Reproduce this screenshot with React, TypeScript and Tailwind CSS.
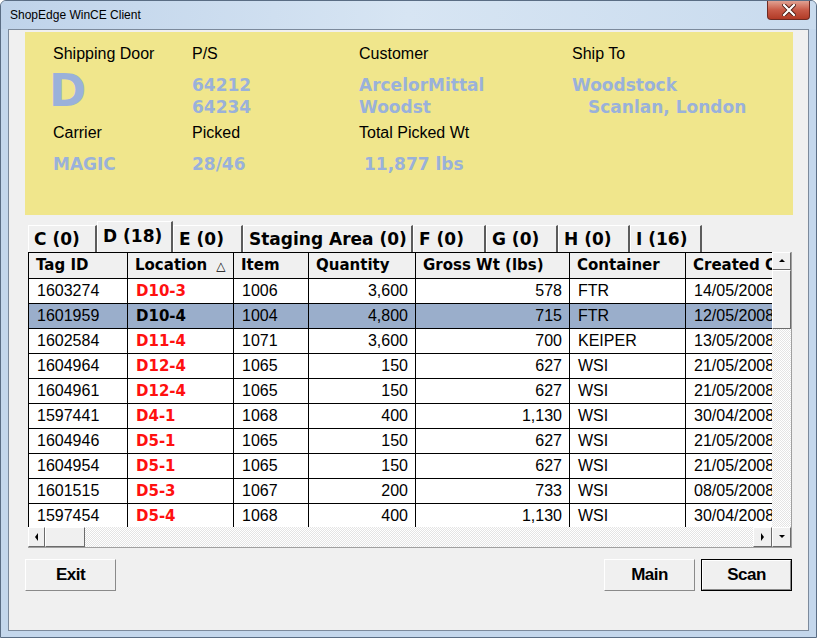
import React from "react";

const rows = [
  ["1603274", "D10-3", "1006", "3,600", "578", "FTR", "14/05/2008"],
  ["1601959", "D10-4", "1004", "4,800", "715", "FTR", "12/05/2008"],
  ["1602584", "D11-4", "1071", "3,600", "700", "KEIPER", "13/05/2008"],
  ["1604964", "D12-4", "1065", "150", "627", "WSI", "21/05/2008"],
  ["1604961", "D12-4", "1065", "150", "627", "WSI", "21/05/2008"],
  ["1597441", "D4-1", "1068", "400", "1,130", "WSI", "30/04/2008"],
  ["1604946", "D5-1", "1065", "150", "627", "WSI", "21/05/2008"],
  ["1604954", "D5-1", "1065", "150", "627", "WSI", "21/05/2008"],
  ["1601515", "D5-3", "1067", "200", "733", "WSI", "08/05/2008"],
  ["1597454", "D5-4", "1068", "400", "1,130", "WSI", "30/04/2008"],
];

const tabs = [
  { label: "C (0)", w: "w-[69px]" },
  { label: "D (18)", w: "w-[76px]", active: true },
  { label: "E (0)", w: "w-[70px]" },
  { label: "Staging Area (0)", w: "w-[170px]" },
  { label: "F (0)", w: "w-[73px]" },
  { label: "G (0)", w: "w-[72px]" },
  { label: "H (0)", w: "w-[72px]" },
  { label: "I (16)", w: "w-[72px]" },
];

const colW = ["w-[99px]", "w-[106px]", "w-[75px]", "w-[107px]", "w-[154px]", "w-[116px]", "w-[130px]"];
const headers = ["Tag ID", "Location", "Item", "Quantity", "Gross Wt (lbs)", "Container", "Created On"];
const rightAlign = [false, false, false, true, true, false, false];

const dither = "bg-[repeating-conic-gradient(#ffffff_0_25%,#e4e4e4_0_50%)] bg-[length:2px_2px]";

function Arrow({ dir }: { dir: "up" | "down" | "left" | "right" }) {
  const pts = {
    up: "1,5 4,2 7,5",
    down: "1,2 4,5 7,2",
    left: "5,0 2,4 5,8",
    right: "2,0 5,4 2,8",
  }[dir];
  return (
    <svg width="8" height="8" viewBox="0 0 8 8">
      <polygon points={pts} fill="#000" />
    </svg>
  );
}

function ScrollBtn({ dir, cls }: { dir: "up" | "down" | "left" | "right"; cls: string }) {
  return (
    <div
      className={`${cls} flex items-center justify-center bg-[#f0f0f0] border border-t-white border-l-white border-r-[#6b6b6b] border-b-[#6b6b6b]`}
    >
      <Arrow dir={dir} />
    </div>
  );
}

function Btn({ label, def }: { label: string; def?: boolean }) {
  return (
    <div className={def ? "border border-black" : ""}>
      <div
        className={`${def ? "w-[89px] h-[30px]" : "w-[91px] h-[32px]"} flex items-center justify-center bg-[#f0f0f0] border border-t-white border-l-white border-r-[#8a8a8a] border-b-[#8a8a8a] font-['Liberation_Sans',sans-serif] font-bold text-[17px] text-black tracking-[-0.5px]`}
      >
        {label}
      </div>
    </div>
  );
}

export default function App() {
  const val = "font-['DejaVu_Sans',sans-serif] font-bold text-[17px] leading-[22px] text-[#9ab1da]";
  const lbl = "font-['Liberation_Sans',sans-serif] text-[16px] leading-[20px] text-black";
  return (
    <div className="w-[817px] h-[638px] overflow-hidden bg-[#c4d7ec] border border-[#5a6d84] rounded-t-[6px] flex flex-col">
      {/* title bar */}
      <div className="h-[28px] shrink-0 flex items-start justify-between bg-gradient-to-r from-[#bfd3ea] via-[#d7e5f3] to-[#c9dbee] pl-[9px]">
        <div className="pt-[7px] font-['Liberation_Sans',sans-serif] text-[12px] leading-[15px] text-black">
          ShopEdge WinCE Client
        </div>
        <div className="mr-[6px] w-[43px] h-[19px] rounded-b-[4px] border border-[#6e2a22] border-t-0 bg-gradient-to-b from-[#e0a192] via-[#c85a47] to-[#b13a26] flex items-center justify-center">
          <svg width="14" height="12" viewBox="0 0 14 12">
            <path d="M2 1 L12 11 M12 1 L2 11" stroke="#4a1a12" strokeWidth="4" strokeLinecap="square" />
            <path d="M2 1 L12 11 M12 1 L2 11" stroke="#fff" strokeWidth="2.2" strokeLinecap="square" />
          </svg>
        </div>
      </div>

      {/* client area */}
      <div className="mx-[7px] h-[602px] shrink-0 border border-[#7c8a9c] bg-[#f0f0f0] flex flex-col">
        {/* info panel */}
        <div className="ml-[16px] mt-[2px] w-[768px] h-[183px] bg-[#f0e68c] pt-[12px] pl-[28px]">
          <div className="grid grid-cols-[139px_167px_213px_1fr]">
            <div className={lbl}>Shipping Door</div>
            <div className={lbl}>P/S</div>
            <div className={lbl}>Customer</div>
            <div className={lbl}>Ship To</div>

            <div className="mt-[10px] h-[44px] -ml-[4px] font-['DejaVu_Sans',sans-serif] font-bold text-[45px] leading-[34px] text-[#9ab1da]">
              D
            </div>
            <div className={`mt-[10px] ${val}`}>
              <div>64212</div>
              <div>64234</div>
            </div>
            <div className={`mt-[10px] ${val}`}>
              <div>ArcelorMittal</div>
              <div>Woodst</div>
            </div>
            <div className={`mt-[10px] ${val}`}>
              <div>Woodstock</div>
              <div className="pl-[16px]">Scanlan, London</div>
            </div>

            <div className={`mt-[5px] ${lbl}`}>Carrier</div>
            <div className={`mt-[5px] ${lbl}`}>Picked</div>
            <div className={`mt-[5px] ${lbl}`}>Total Picked Wt</div>
            <div className="mt-[5px]" />

            <div className={`mt-[10px] ${val}`}>MAGIC</div>
            <div className={`mt-[10px] ${val}`}>28/46</div>
            <div className={`mt-[10px] pl-[5px] ${val}`}>11,877 lbs</div>
            <div />
          </div>
        </div>

        {/* tabs */}
        <div className="ml-[19px] mt-[7px] h-[30px] flex items-end">
          {tabs.map((t) => (
            <div
              key={t.label}
              className={`${t.w} ${t.active ? "h-[31px] pb-[3px]" : "h-[27px]"} flex items-center pl-[5px] bg-[#f0f0f0] border-t border-l border-t-white border-l-white border-r-2 border-r-[#5c5c5c] font-['DejaVu_Sans',sans-serif] font-bold text-[17px] leading-[20px] text-black whitespace-nowrap overflow-hidden`}
            >
              {t.label}
            </div>
          ))}
        </div>

        {/* grid */}
        <div className="ml-[19px] w-[764px] h-[296px] flex border-r border-b border-[#a0a0a0] bg-[#f0f0f0]">
          <div className="w-[744px] flex flex-col">
            <div className="h-[276px] overflow-hidden border-l border-t border-black font-['Liberation_Sans',sans-serif] text-[16px] text-black">
              <div className="flex h-[26px] bg-[#f0f0f0]">
                {headers.map((h, i) => (
                  <div
                    key={h}
                    className={`${colW[i]} shrink-0 border-r border-b border-black flex items-center pl-[7px] font-['DejaVu_Sans',sans-serif] font-bold text-[15px] whitespace-nowrap overflow-hidden`}
                  >
                    {h}
                    {i === 1 && <span className="ml-[9px] text-[12px] font-normal">△</span>}
                  </div>
                ))}
              </div>
              {rows.map((r, ri) => (
                <div key={ri} className={`flex h-[25px] ${ri === 1 ? "bg-[#9aaecb]" : "bg-white"}`}>
                  {r.map((c, ci) => (
                    <div
                      key={ci}
                      className={`${colW[ci]} shrink-0 border-r border-b border-black flex items-center whitespace-nowrap overflow-hidden ${
                        rightAlign[ci] ? "justify-end pr-[7px]" : "pl-[8px]"
                      } ${
                        ci === 1
                          ? `font-['DejaVu_Sans',sans-serif] font-bold text-[15px] ${ri === 1 ? "text-black" : "text-[#ff1010]"}`
                          : ""
                      }`}
                    >
                      {c}
                    </div>
                  ))}
                </div>
              ))}
            </div>
            {/* horizontal scrollbar */}
            <div className={`h-[20px] flex ${dither}`}>
              <ScrollBtn dir="left" cls="w-[17px] h-[20px]" />
              <div className="w-[40px] h-[20px] bg-[#f0f0f0] border border-t-white border-l-white border-r-[#6b6b6b] border-b-[#6b6b6b]" />
              <div className="flex-1" />
              <ScrollBtn dir="right" cls="w-[19px] h-[20px]" />
            </div>
          </div>
          {/* vertical scrollbar */}
          <div className={`w-[19px] flex flex-col ${dither}`}>
            <ScrollBtn dir="up" cls="w-[19px] h-[18px]" />
            <div className="w-[19px] h-[59px] bg-[#f0f0f0] border border-t-white border-l-white border-r-[#6b6b6b] border-b-[#6b6b6b]" />
            <div className="flex-1" />
            <ScrollBtn dir="down" cls="w-[19px] h-[20px]" />
          </div>
        </div>

        {/* buttons */}
        <div className="mt-[11px] ml-[16px] mr-[16px] flex items-start">
          <Btn label="Exit" />
          <div className="flex-1" />
          <Btn label="Main" />
          <div className="w-[6px]" />
          <Btn label="Scan" def />
        </div>
      </div>
    </div>
  );
}
